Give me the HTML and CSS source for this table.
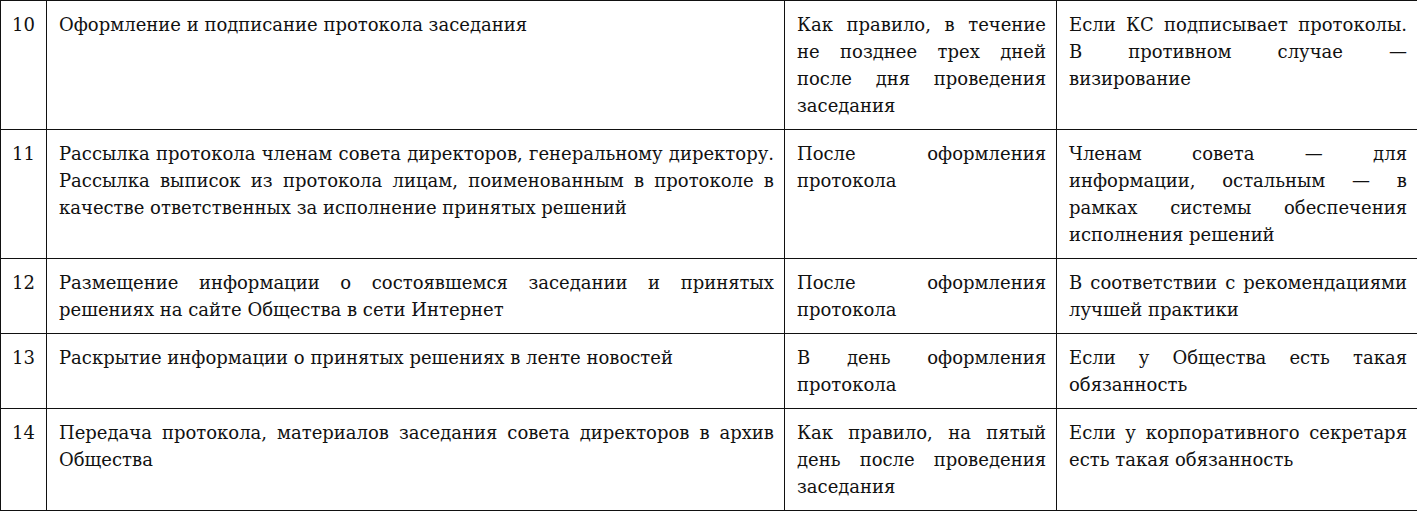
FILE: index.html
```html
<!DOCTYPE html>
<html lang="ru">
<head>
<meta charset="utf-8">
<link rel="stylesheet" href="styles.css">
</head>
<body>
<table class="tbl">
  <colgroup>
    <col class="c-num">
    <col class="c-act">
    <col class="c-time">
    <col class="c-note">
  </colgroup>
  <tbody>
    <tr>
      <td class="num">10</td>
      <td>Оформление и подписание протокола заседания</td>
      <td>Как правило, в течение не позднее трех дней после дня проведения заседания</td>
      <td>Если КС подписывает протоколы. В противном случае — визирование</td>
    </tr>
    <tr>
      <td class="num">11</td>
      <td>Рассылка протокола членам совета директоров, генеральному директору. Рассылка выписок из протокола лицам, поименованным в протоколе в качестве ответственных за исполнение принятых решений</td>
      <td>После оформления протокола</td>
      <td><span class="jline">Членам совета — для</span><span class="jline">информации, остальным — в</span><span class="jline">рамках системы обеспечения</span>исполнения решений</td>
    </tr>
    <tr>
      <td class="num">12</td>
      <td>Размещение информации о состоявшемся заседании и принятых решениях на сайте Общества в сети Интернет</td>
      <td>После оформления протокола</td>
      <td>В соответствии с рекомендациями лучшей практики</td>
    </tr>
    <tr>
      <td class="num">13</td>
      <td>Раскрытие информации о принятых решениях в ленте новостей</td>
      <td>В день оформления протокола</td>
      <td>Если у Общества есть такая обязанность</td>
    </tr>
    <tr>
      <td class="num">14</td>
      <td>Передача протокола, материалов заседания совета директоров в архив Общества</td>
      <td>Как правило, на пятый день после проведения заседания</td>
      <td>Если у корпоративного секретаря есть такая обязанность</td>
    </tr>
  </tbody>
</table>
</body>
</html>
```
FILE: styles.css
```css
html, body {
  margin: 0;
  padding: 0;
  background: #fff;
}
.tbl {
  width: 1417px;
  table-layout: fixed;
  border-collapse: collapse;
  font-family: "DejaVu Serif", "Liberation Serif", serif;
  font-size: 18px;
  line-height: 27px;
  color: #111;
}
.c-num { width: 46px; }
.c-act { width: 738px; }
.c-time { width: 272px; }
.c-note { width: 361px; }
.tbl td {
  border: 1px solid #111;
  vertical-align: top;
  text-align: justify;
  padding: 10px 10px 10px 12px;
}
.tbl td.num {
  text-align: center;
  padding-left: 4px;
  padding-right: 4px;
}
.jline {
  display: block;
  text-align: justify;
  text-align-last: justify;
}
```
